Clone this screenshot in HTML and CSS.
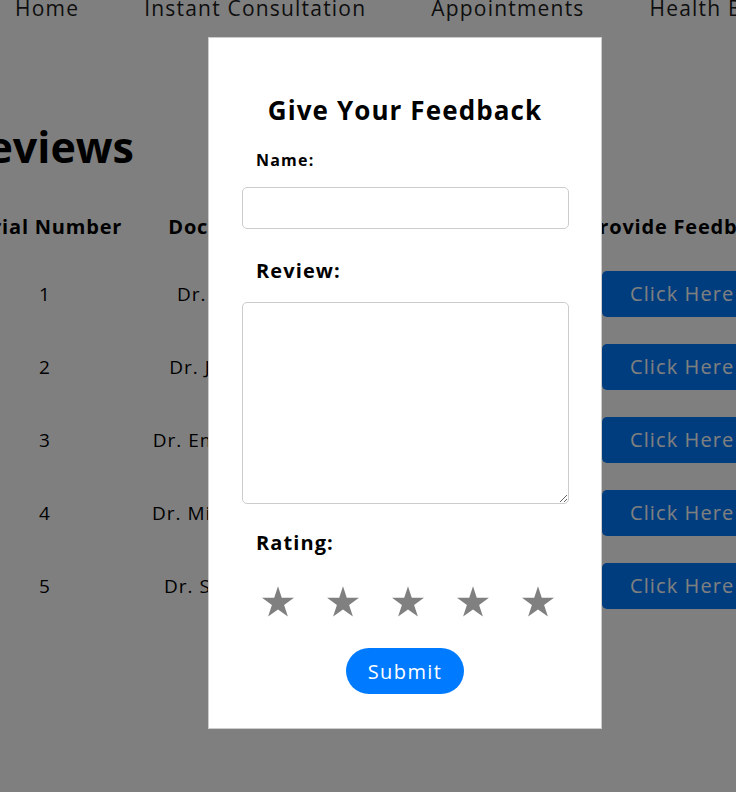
FILE: index.html
```html
<!DOCTYPE html>
<html lang="en">
<head>
<meta charset="utf-8">
<title>Reviews</title>
<link rel="stylesheet" href="styles.css">
</head>
<body>
<nav class="nav">
  <a class="nav-link">Home</a>
  <a class="nav-link">Instant Consultation</a>
  <a class="nav-link">Appointments</a>
  <a class="nav-link">Health Blog</a>
  <a class="nav-link">Reviews</a>
</nav>
<main class="main">
  <h1 class="page-title">Reviews</h1>
  <div class="table">
    <div class="row head">
      <div class="cell">Serial Number</div>
      <div class="cell">Doctor Name</div>
      <div class="cell">Doctor Speciality</div>
      <div class="cell">Provide Feedback</div>
    </div>
    <div class="row">
      <div class="cell">1</div>
      <div class="cell">Dr. John Doe</div>
      <div class="cell">Cardiology</div>
      <div class="cell"><button class="btn">Click Here</button></div>
    </div>
    <div class="row">
      <div class="cell">2</div>
      <div class="cell">Dr. Jane Smith</div>
      <div class="cell">Dermatology</div>
      <div class="cell"><button class="btn">Click Here</button></div>
    </div>
    <div class="row">
      <div class="cell">3</div>
      <div class="cell">Dr. Emily Johnson</div>
      <div class="cell">Pediatrics</div>
      <div class="cell"><button class="btn">Click Here</button></div>
    </div>
    <div class="row">
      <div class="cell">4</div>
      <div class="cell">Dr. Michael Brown</div>
      <div class="cell">Neurology</div>
      <div class="cell"><button class="btn">Click Here</button></div>
    </div>
    <div class="row">
      <div class="cell">5</div>
      <div class="cell">Dr. Sarah Davis</div>
      <div class="cell">Orthopedics</div>
      <div class="cell"><button class="btn">Click Here</button></div>
    </div>
  </div>
</main>

<div class="overlay">
  <div class="modal">
    <h2 class="modal-title">Give Your Feedback</h2>
    <label class="label label-sm" for="name">Name:</label>
    <input class="input" id="name" type="text">
    <label class="label label-lg review-label" for="review">Review:</label>
    <textarea class="textarea" id="review"></textarea>
    <div class="label label-lg rating-label">Rating:</div>
    <div class="stars">
      <svg class="star" viewBox="-16 -17 32 31"><polygon points="0,-16.8 3.77,-5.19 15.98,-5.19 6.11,1.98 9.88,13.59 0,6.42 -9.88,13.59 -6.11,1.98 -15.98,-5.19 -3.77,-5.19"/></svg>
      <svg class="star" viewBox="-16 -17 32 31"><polygon points="0,-16.8 3.77,-5.19 15.98,-5.19 6.11,1.98 9.88,13.59 0,6.42 -9.88,13.59 -6.11,1.98 -15.98,-5.19 -3.77,-5.19"/></svg>
      <svg class="star" viewBox="-16 -17 32 31"><polygon points="0,-16.8 3.77,-5.19 15.98,-5.19 6.11,1.98 9.88,13.59 0,6.42 -9.88,13.59 -6.11,1.98 -15.98,-5.19 -3.77,-5.19"/></svg>
      <svg class="star" viewBox="-16 -17 32 31"><polygon points="0,-16.8 3.77,-5.19 15.98,-5.19 6.11,1.98 9.88,13.59 0,6.42 -9.88,13.59 -6.11,1.98 -15.98,-5.19 -3.77,-5.19"/></svg>
      <svg class="star" viewBox="-16 -17 32 31"><polygon points="0,-16.8 3.77,-5.19 15.98,-5.19 6.11,1.98 9.88,13.59 0,6.42 -9.88,13.59 -6.11,1.98 -15.98,-5.19 -3.77,-5.19"/></svg>
    </div>
    <div class="submit-wrap"><button class="submit">Submit</button></div>
  </div>
</div>
</body>
</html>
```

FILE: styles.css
```css
html, body {
  margin: 0;
  padding: 0;
  overflow: hidden;
  width: 736px;
  height: 792px;
  background: #ffffff;
  font-family: "Open Sans", "DejaVu Sans", sans-serif;
  color: #000;
}

.nav {
  display: flex;
  gap: 65px;
  padding-left: 15px;
  margin-top: -7px;
  height: 30px;
  align-items: center;
  white-space: nowrap;
}

.nav-link {
  font-size: 21px;
  line-height: 30px;
  color: #1c1c1c;
  letter-spacing: 1.2px;
}

.main {
  margin-left: -62px;
  width: 1000px;
}

.page-title {
  margin: 0;
  margin-top: 96px;
  padding-left: 21px;
  font-size: 43px;
  line-height: 56px;
  font-weight: 700;
}

.table {
  margin-top: 31px;
}

.row {
  display: grid;
  grid-template-columns: 214px 174px 240px 220px;
  align-items: center;
  height: 73px;
  font-size: 19px;
  letter-spacing: 1px;
}

.row.head {
  height: 40px;
  font-weight: 700;
  font-size: 20px;
  letter-spacing: 0.8px;
  margin-bottom: 11px;
}

.cell {
  text-align: center;
  white-space: nowrap;
}

.row .cell:last-child {
  text-align: left;
  padding-left: 36px;
}

.row.head .cell:last-child {
  padding-left: 20px;
}

.btn {
  font-family: inherit;
  font-size: 20px;
  letter-spacing: 1.1px;
  color: #fff;
  background: #007bff;
  border: none;
  border-radius: 5px;
  height: 46px;
  width: 170px;
  padding: 0 0 0 28px;
  text-align: left;
}

.overlay {
  position: fixed;
  inset: 0;
  background: rgba(0, 0, 0, 0.5);
}

.modal {
  position: absolute;
  left: 208px;
  top: 37px;
  width: 392px;
  height: 690px;
  box-sizing: content-box;
  background: #fff;
  border: 1px solid #cccccc;
  padding: 0;
}

.modal-title {
  margin: 54px 0 0;
  text-align: center;
  font-size: 26px;
  line-height: 36px;
  font-weight: 700;
  letter-spacing: 1.1px;
}

.label {
  display: block;
  margin-left: 47px;
  font-weight: 700;
}

.label-sm {
  font-size: 16px;
  line-height: 24px;
  margin-top: 20px;
  letter-spacing: 1.2px;
}

.label-lg {
  font-size: 20px;
  line-height: 30px;
  letter-spacing: 1.1px;
}

.input {
  display: block;
  box-sizing: border-box;
  margin: 15px 0 0 33px;
  width: 327px;
  height: 42px;
  border: 1px solid #cccccc;
  border-radius: 5px;
  background: #fff;
}

.review-label {
  margin-top: 27px;
}

.textarea {
  display: block;
  box-sizing: border-box;
  margin: 16px 0 0 33px;
  width: 327px;
  height: 202px;
  border: 1px solid #cccccc;
  border-radius: 5px;
  background: #fff;
  resize: both;
}

.rating-label {
  margin-top: 24px;
}

.stars {
  display: flex;
  gap: 33px;
  margin: 28px 0 0 53px;
}

.star {
  width: 32px;
  height: 31px;
  fill: #808080;
}

.submit-wrap {
  display: flex;
  justify-content: center;
  margin-top: 31px;
}

.submit {
  font-family: inherit;
  font-size: 20px;
  letter-spacing: 1.4px;
  color: #fff;
  background: #007bff;
  border: none;
  border-radius: 23px;
  width: 118px;
  height: 46px;
  padding: 0;
}
```
